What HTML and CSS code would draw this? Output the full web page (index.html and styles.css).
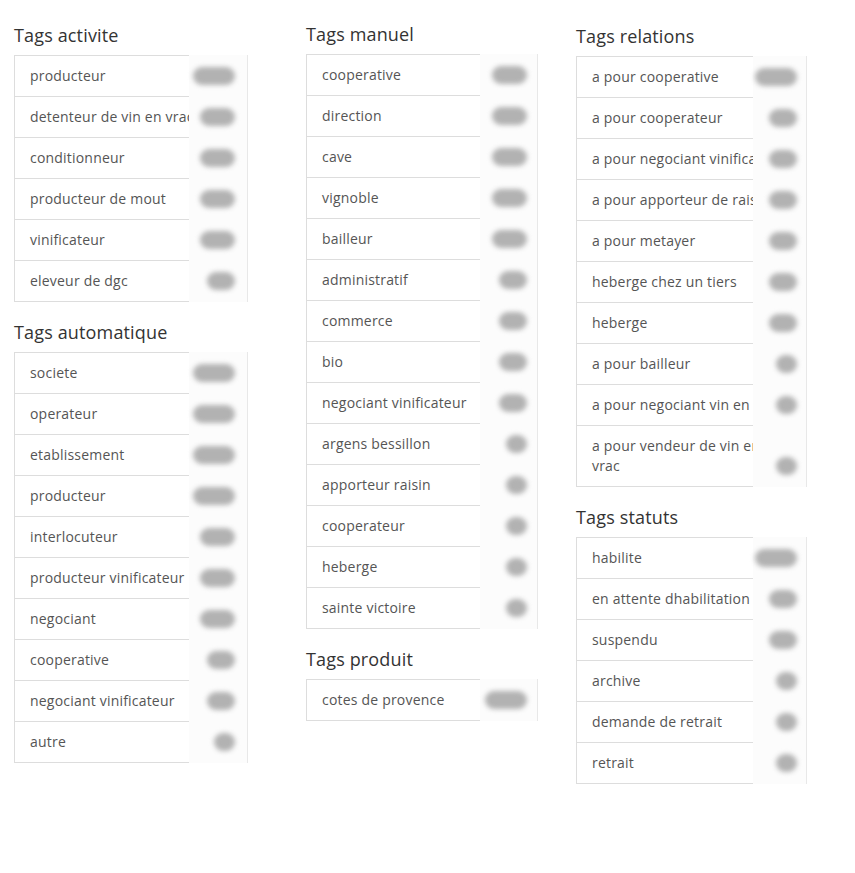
FILE: index.html
```html
<!DOCTYPE html>
<html lang="fr">
<head>
<meta charset="utf-8">
<title>Tags</title>
<link rel="stylesheet" href="styles.css">
</head>
<body>
<main class="page">
  <div class="col col-a">
    <section>
      <h4 class="title">Tags activite</h4>
      <ul class="list">
        <li class="item"><span class="label">producteur</span><span class="mask"><i class="pill n4"></i></span></li>
        <li class="item"><span class="label">detenteur de vin en vrac</span><span class="mask"><i class="pill n3"></i></span></li>
        <li class="item"><span class="label">conditionneur</span><span class="mask"><i class="pill n3"></i></span></li>
        <li class="item"><span class="label">producteur de mout</span><span class="mask"><i class="pill n3"></i></span></li>
        <li class="item"><span class="label">vinificateur</span><span class="mask"><i class="pill n3"></i></span></li>
        <li class="item"><span class="label">eleveur de dgc</span><span class="mask"><i class="pill n2"></i></span></li>
      </ul>
    </section>
    <section>
      <h4 class="title">Tags automatique</h4>
      <ul class="list">
        <li class="item"><span class="label">societe</span><span class="mask"><i class="pill n4"></i></span></li>
        <li class="item"><span class="label">operateur</span><span class="mask"><i class="pill n4"></i></span></li>
        <li class="item"><span class="label">etablissement</span><span class="mask"><i class="pill n4"></i></span></li>
        <li class="item"><span class="label">producteur</span><span class="mask"><i class="pill n4"></i></span></li>
        <li class="item"><span class="label">interlocuteur</span><span class="mask"><i class="pill n3"></i></span></li>
        <li class="item"><span class="label">producteur vinificateur</span><span class="mask"><i class="pill n3"></i></span></li>
        <li class="item"><span class="label">negociant</span><span class="mask"><i class="pill n3"></i></span></li>
        <li class="item"><span class="label">cooperative</span><span class="mask"><i class="pill n2"></i></span></li>
        <li class="item"><span class="label">negociant vinificateur</span><span class="mask"><i class="pill n2"></i></span></li>
        <li class="item"><span class="label">autre</span><span class="mask"><i class="pill n1"></i></span></li>
      </ul>
    </section>
  </div>
  <div class="col col-b">
    <section>
      <h4 class="title">Tags manuel</h4>
      <ul class="list">
        <li class="item"><span class="label">cooperative</span><span class="mask"><i class="pill n3"></i></span></li>
        <li class="item"><span class="label">direction</span><span class="mask"><i class="pill n3"></i></span></li>
        <li class="item"><span class="label">cave</span><span class="mask"><i class="pill n3"></i></span></li>
        <li class="item"><span class="label">vignoble</span><span class="mask"><i class="pill n3"></i></span></li>
        <li class="item"><span class="label">bailleur</span><span class="mask"><i class="pill n3"></i></span></li>
        <li class="item"><span class="label">administratif</span><span class="mask"><i class="pill n2"></i></span></li>
        <li class="item"><span class="label">commerce</span><span class="mask"><i class="pill n2"></i></span></li>
        <li class="item"><span class="label">bio</span><span class="mask"><i class="pill n2"></i></span></li>
        <li class="item"><span class="label">negociant vinificateur</span><span class="mask"><i class="pill n2"></i></span></li>
        <li class="item"><span class="label">argens bessillon</span><span class="mask"><i class="pill n1"></i></span></li>
        <li class="item"><span class="label">apporteur raisin</span><span class="mask"><i class="pill n1"></i></span></li>
        <li class="item"><span class="label">cooperateur</span><span class="mask"><i class="pill n1"></i></span></li>
        <li class="item"><span class="label">heberge</span><span class="mask"><i class="pill n1"></i></span></li>
        <li class="item"><span class="label">sainte victoire</span><span class="mask"><i class="pill n1"></i></span></li>
      </ul>
    </section>
    <section>
      <h4 class="title">Tags produit</h4>
      <ul class="list">
        <li class="item"><span class="label">cotes de provence</span><span class="mask"><i class="pill n4"></i></span></li>
      </ul>
    </section>
  </div>
  <div class="col col-c">
    <section>
      <h4 class="title">Tags relations</h4>
      <ul class="list">
        <li class="item"><span class="label">a pour cooperative</span><span class="mask"><i class="pill n4"></i></span></li>
        <li class="item"><span class="label">a pour cooperateur</span><span class="mask"><i class="pill n2"></i></span></li>
        <li class="item"><span class="label">a pour negociant vinificateur</span><span class="mask"><i class="pill n2"></i></span></li>
        <li class="item"><span class="label">a pour apporteur de raisin</span><span class="mask"><i class="pill n2"></i></span></li>
        <li class="item"><span class="label">a pour metayer</span><span class="mask"><i class="pill n2"></i></span></li>
        <li class="item"><span class="label">heberge chez un tiers</span><span class="mask"><i class="pill n2"></i></span></li>
        <li class="item"><span class="label">heberge</span><span class="mask"><i class="pill n2"></i></span></li>
        <li class="item"><span class="label">a pour bailleur</span><span class="mask"><i class="pill n1"></i></span></li>
        <li class="item"><span class="label">a pour negociant vin en vrac</span><span class="mask"><i class="pill n1"></i></span></li>
        <li class="item"><span class="label">a pour vendeur de vin en vrac</span><span class="mask"><i class="pill n1"></i></span></li>
      </ul>
    </section>
    <section>
      <h4 class="title">Tags statuts</h4>
      <ul class="list">
        <li class="item"><span class="label">habilite</span><span class="mask"><i class="pill n4"></i></span></li>
        <li class="item"><span class="label">en attente dhabilitation</span><span class="mask"><i class="pill n2"></i></span></li>
        <li class="item"><span class="label">suspendu</span><span class="mask"><i class="pill n2"></i></span></li>
        <li class="item"><span class="label">archive</span><span class="mask"><i class="pill n1"></i></span></li>
        <li class="item"><span class="label">demande de retrait</span><span class="mask"><i class="pill n1"></i></span></li>
        <li class="item"><span class="label">retrait</span><span class="mask"><i class="pill n1"></i></span></li>
      </ul>
    </section>
  </div>
</main>
</body>
</html>
```
FILE: styles.css
```css
html, body {
  margin: 0;
  padding: 0;
  background: #fff;
}
body {
  font-family: "Open Sans", "DejaVu Sans", sans-serif;
  font-size: 14px;
  color: #555;
}
.page {
  display: grid;
  grid-template-columns: 292px 270px 231px;
  padding-left: 14px;
  align-items: start;
}
.col-a { --list-w: 234px; --ov-w: 59px; --ov-pr: 12px; padding-top: 25px; }
.col-b { --list-w: 232px; --ov-w: 58px; --ov-pr: 10px; padding-top: 24px; }
.col-c { --list-w: 231px; --ov-w: 54px; --ov-pr: 9px; padding-top: 26px; }

.title {
  margin: 0 0 10px;
  font-size: 18px;
  line-height: 20px;
  font-weight: 400;
  letter-spacing: 0.15px;
  color: #333;
}
.list {
  list-style: none;
  margin: 0 0 20px;
  padding: 0;
  width: var(--list-w);
}
.item {
  display: grid;
  grid-template-columns: 1fr var(--ov-w);
}
.label {
  grid-area: 1 / 1 / 2 / 3;
  padding: 10px 19px 10px 15px;
  line-height: 20px;
  letter-spacing: 0.2px;
  border-left: 1px solid #ddd;
  border-bottom: 1px solid #ddd;
  color: #555;
}
.item:first-child .label {
  border-top: 1px solid #ddd;
}
.mask {
  grid-area: 1 / 2 / 2 / 3;
  z-index: 1;
  background: #fcfcfc;
  border-right: 1px solid #e8e8e8;
  display: flex;
  justify-content: flex-end;
  align-items: flex-end;
  padding: 0 var(--ov-pr) 12px 0;
}
.pill {
  display: block;
  height: 18px;
  border-radius: 9px;
  background: #b2b2b2;
  filter: blur(2.5px);
}
.n4 { width: 42px; }
.n3 { width: 35px; }
.n2 { width: 28px; }
.n1 { width: 21px; }
```
